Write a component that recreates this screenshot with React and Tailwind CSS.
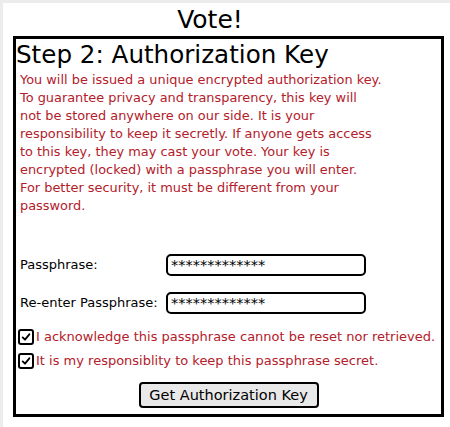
import React from "react";

const lines = [
  "You will be issued a unique encrypted authorization key.",
  "To guarantee privacy and transparency, this key will",
  "not be stored anywhere on our side. It is your",
  "responsibility to keep it secretly. If anyone gets access",
  "to this key, they may cast your vote. Your key is",
  "encrypted (locked) with a passphrase you will enter.",
  "For better security, it must be different from your",
  "password.",
];

function Check() {
  return (
    <span className="flex h-[16px] w-[16px] shrink-0 items-center justify-center rounded-[3px] border-2 border-black bg-white">
      <svg viewBox="0 0 12 12" className="h-[10px] w-[10px]">
        <path d="M2 6.5 L4.8 9.2 L10 2.8" fill="none" stroke="black" strokeWidth="2.2" strokeLinecap="round" strokeLinejoin="round" />
      </svg>
    </span>
  );
}

export default function App() {
  return (
    <div className="h-[427px] w-[450px] bg-[#ececec] pl-[3px] pt-[3px] font-['Comic_Sans_MS','DejaVu_Sans',sans-serif]">
      <div className="h-full w-full bg-white">
        <div className="flex h-[33px] w-[414px] items-center justify-center text-[25px] leading-none text-black">
          Vote!
        </div>
        <div className="ml-[10px] h-[381px] w-[431px] border-[3px] border-black">
          <div className="h-[32px] whitespace-nowrap text-[24.6px] leading-[31px] text-black">Step 2: Authorization Key</div>
          <p className="whitespace-nowrap pl-[4px] text-[12.9px] leading-[18px] text-[#b3202a]">
            {lines.map((l, i) => (
              <React.Fragment key={i}>
                {l}
                {i < lines.length - 1 && <br />}
              </React.Fragment>
            ))}
          </p>
          <div className="mt-[39px] flex h-[22px] items-center pl-[4px]">
            <span className="w-[146px] text-[13px] text-black">Passphrase:</span>
            <input
              readOnly
              value="*************"
              className="h-[22px] w-[200px] rounded-[5px] border-2 border-black px-[3px] text-[14.5px] text-black outline-none"
            />
          </div>
          <div className="mt-[16px] flex h-[22px] items-center pl-[4px]">
            <span className="w-[146px] text-[13px] text-black">Re-enter Passphrase:</span>
            <input
              readOnly
              value="*************"
              className="h-[22px] w-[200px] rounded-[5px] border-2 border-black px-[3px] text-[14.5px] text-black outline-none"
            />
          </div>
          <div className="mt-[14px] flex h-[17px] items-center gap-[2px] whitespace-nowrap pl-[2px] text-[13px] text-[#b3202a]">
            <Check />
            <span>I acknowledge this passphrase cannot be reset nor retrieved.</span>
          </div>
          <div className="mt-[7px] flex h-[17px] items-center gap-[2px] whitespace-nowrap pl-[2px] text-[13px] text-[#b3202a]">
            <Check />
            <span>It is my responsiblity to keep this passphrase secret.</span>
          </div>
          <div className="mt-[13px] flex justify-center">
            <button className="h-[26px] w-[180px] whitespace-nowrap rounded-[4px] border-2 border-black bg-[#e9e9e9] text-[14.5px] leading-none text-black">
              Get Authorization Key
            </button>
          </div>
        </div>
      </div>
    </div>
  );
}
